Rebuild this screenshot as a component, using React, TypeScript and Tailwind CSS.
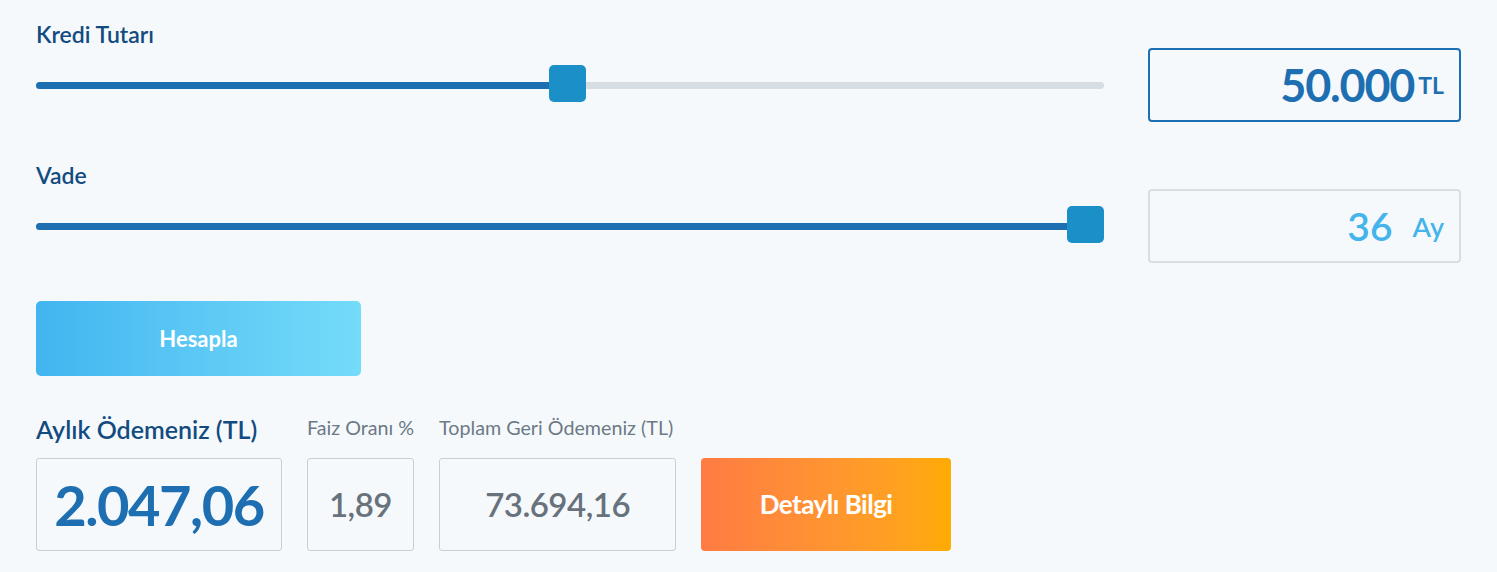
import React from "react";

const font = { fontFamily: '"Source Sans Pro", Lato, "Noto Sans", sans-serif' };

function Slider({ pct }: { pct: number }) {
  return (
    <div className="relative flex-1 h-[36px] flex items-center">
      <div className="w-full h-[7px] rounded-full bg-[#d6dde3] overflow-hidden">
        <div className="h-full bg-[#1d6fb1]" style={{ width: `calc(${pct * 100}% - ${pct * 37}px + 18px)` }} />
      </div>
      <div
        className="absolute top-[-2px] w-[37px] h-[37px] rounded-[5px] bg-[#1a8fc8]"
        style={{ left: `calc(${pct * 100}% - ${pct * 37}px)` }}
      />
    </div>
  );
}

function Row({ label, pct, children, active }: { label: string; pct: number; children: React.ReactNode; active?: boolean }) {
  return (
    <div>
      <div className="h-[28px] flex items-center text-[23px] font-semibold text-[#134b81]">{label}</div>
      <div className="flex items-center gap-[44px]">
        <Slider pct={pct} />
        <div
          className={`w-[313px] h-[74px] rounded-[4px] flex items-center justify-end pr-[15px] ${
            active ? "border-2 border-[#1d6fb1]" : "border-2 border-[#d9dee2]"
          }`}
        >
          {children}
        </div>
      </div>
    </div>
  );
}

export default function App() {
  return (
    <div className="w-[1497px] h-[572px] bg-[#f5f9fc] px-[36px] pt-[20px]" style={font}>
      <Row label="Kredi Tutarı" pct={0.4976} active>
        <span className="text-[45px] font-bold text-[#1d6fb1] tracking-[-1.2px] leading-none">50.000</span>
        <span className="ml-[4px] text-[23px] font-bold text-[#1d6fb1] leading-none">TL</span>
      </Row>
      <div className="h-[39px]" />
      <Row label="Vade" pct={1}>
        <span className="text-[39px] font-semibold text-[#45b4ea] leading-none">36</span>
        <span className="ml-[20px] text-[27px] font-semibold text-[#45b4ea] leading-none">Ay</span>
      </Row>
      <button className="mt-[38px] w-[325px] h-[75px] rounded-[5px] bg-gradient-to-r from-[#41b5f0] to-[#74dbf9] text-white text-[22px] font-bold">
        Hesapla
      </button>
      <div className="mt-[36px] flex gap-[25px]">
        <div>
          <div className="h-[36px] flex items-center text-[25px] font-semibold text-[#134b81]">Aylık Ödemeniz (TL)</div>
          <div className="mt-[10px] w-[246px] h-[93px] border border-[#c9ced3] rounded-[3px] flex items-center justify-center text-[56px] font-bold text-[#1d6fb1] tracking-[-1.5px]">
            2.047,06
          </div>
        </div>
        <div>
          <div className="h-[31px] flex items-center text-[19.7px] text-[#6d7985] whitespace-nowrap">Faiz Oranı %</div>
          <div className="mt-[15px] w-[107px] h-[93px] border border-[#c9ced3] rounded-[3px] flex items-center justify-center text-[33px] font-semibold text-[#68727c] tracking-[-0.5px]">
            1,89
          </div>
        </div>
        <div>
          <div className="h-[31px] flex items-center text-[19.7px] text-[#6d7985] whitespace-nowrap">Toplam Geri Ödemeniz (TL)</div>
          <div className="mt-[15px] w-[237px] h-[93px] border border-[#c9ced3] rounded-[3px] flex items-center justify-center text-[33px] font-semibold text-[#68727c] tracking-[-0.5px]">
            73.694,16
          </div>
        </div>
        <div className="flex flex-col justify-end">
          <button className="w-[250px] h-[93px] rounded-[4px] bg-gradient-to-r from-[#ff7b43] to-[#ffab00] text-white text-[26px] font-bold tracking-[-0.5px]">
            Detaylı Bilgi
          </button>
        </div>
      </div>
    </div>
  );
}
